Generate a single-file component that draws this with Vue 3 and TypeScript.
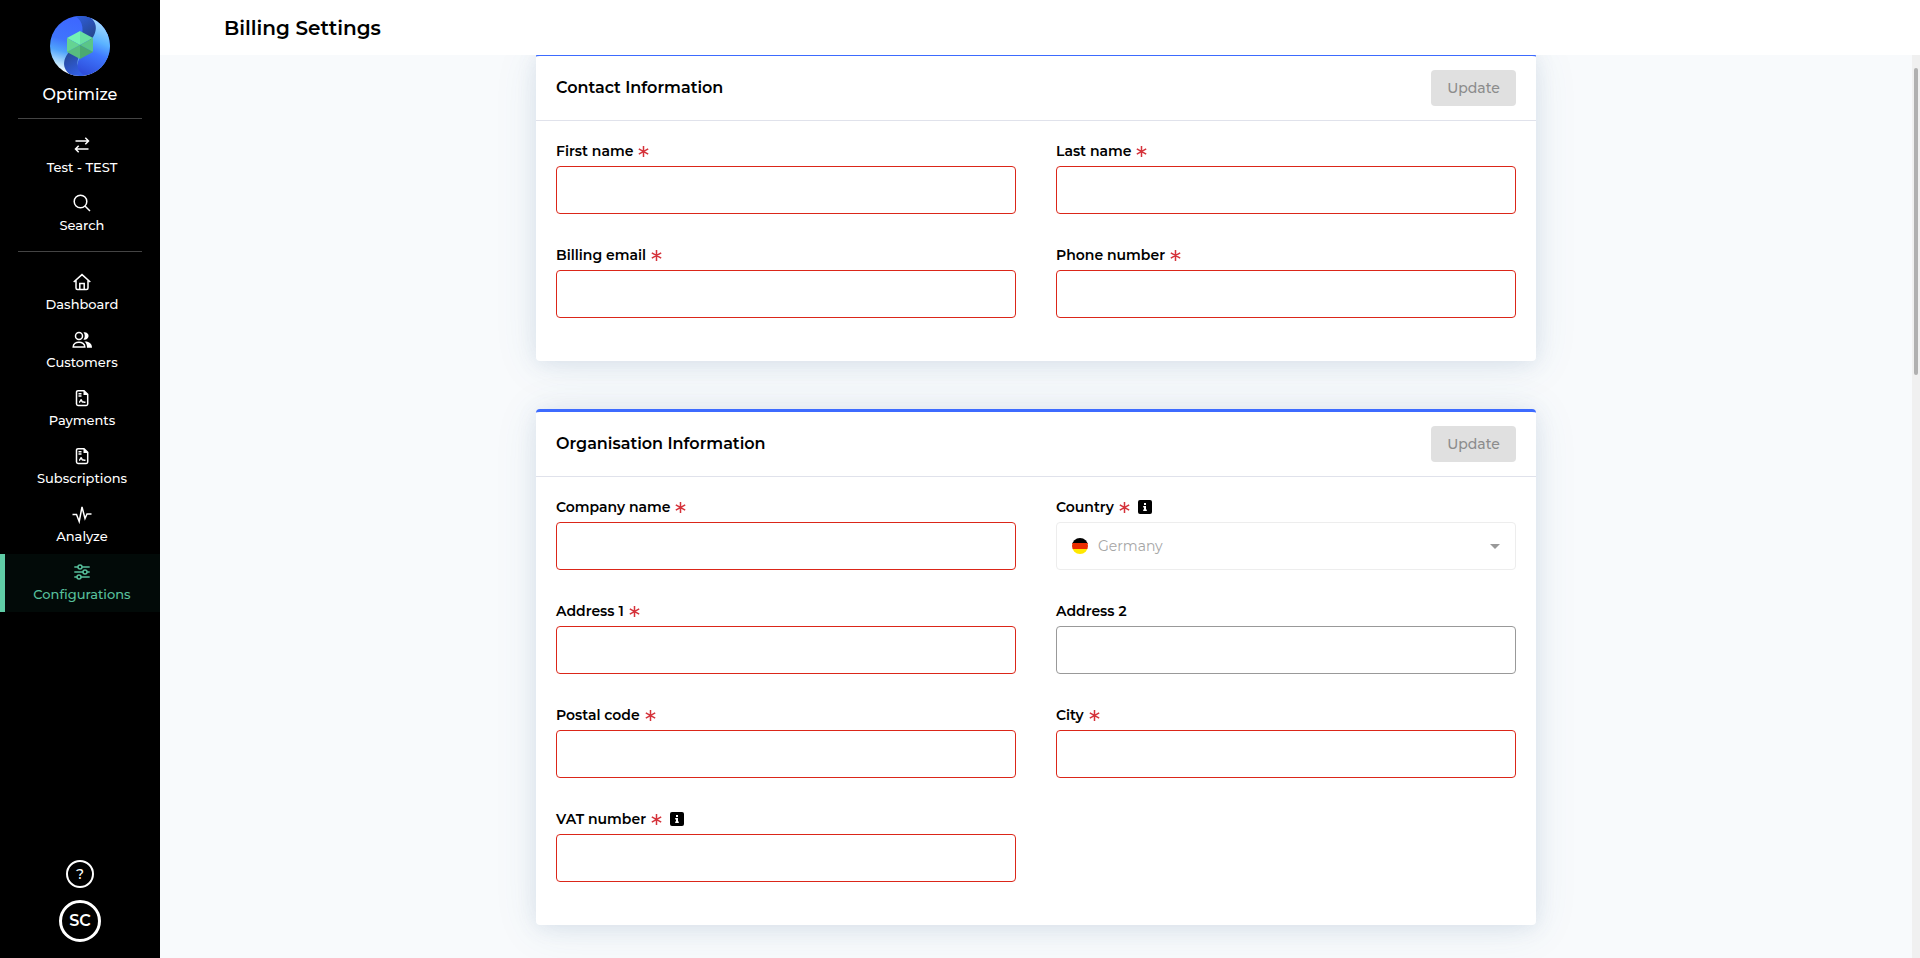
<script setup lang="ts">
import { ref } from 'vue'

interface NavItem {
  label: string
  icon: string
  active?: boolean
}

interface Field {
  id: string
  label: string
  required: boolean
  info?: boolean
  select?: boolean
}

interface Card {
  title: string
  fields: Field[]
}

const workspace: NavItem[] = [
  { label: 'Test - TEST', icon: 'switch' },
  { label: 'Search', icon: 'search' },
]

const navigation: NavItem[] = [
  { label: 'Dashboard', icon: 'home' },
  { label: 'Customers', icon: 'people' },
  { label: 'Payments', icon: 'file' },
  { label: 'Subscriptions', icon: 'file' },
  { label: 'Analyze', icon: 'pulse' },
  { label: 'Configurations', icon: 'sliders', active: true },
]

const groups = [workspace, navigation]

const cards: Card[] = [
  {
    title: 'Contact Information',
    fields: [
      { id: 'first-name', label: 'First name', required: true },
      { id: 'last-name', label: 'Last name', required: true },
      { id: 'billing-email', label: 'Billing email', required: true },
      { id: 'phone-number', label: 'Phone number', required: true },
    ],
  },
  {
    title: 'Organisation Information',
    fields: [
      { id: 'company-name', label: 'Company name', required: true },
      { id: 'country', label: 'Country', required: true, info: true, select: true },
      { id: 'address-1', label: 'Address 1', required: true },
      { id: 'address-2', label: 'Address 2', required: false },
      { id: 'postal-code', label: 'Postal code', required: true },
      { id: 'city', label: 'City', required: true },
      { id: 'vat-number', label: 'VAT number', required: true, info: true },
    ],
  },
]

const values = ref<Record<string, string>>({ country: 'Germany' })
</script>

<template>
  <div class="shell">
    <aside class="sidebar">
      <svg class="logo" viewBox="0 0 60 60" aria-hidden="true">
        <defs>
          <clipPath id="disc"><circle cx="30" cy="30" r="30" /></clipPath>
          <linearGradient id="left" x1="0.5" y1="0.1" x2="0.25" y2="0.95">
            <stop offset="0" stop-color="#3d68ff" />
            <stop offset="0.4" stop-color="#3f74fd" />
            <stop offset="0.62" stop-color="#4fa2fb" />
            <stop offset="0.85" stop-color="#b4dffd" />
            <stop offset="1" stop-color="#ffffff" />
          </linearGradient>
          <linearGradient id="right" x1="0.7" y1="0" x2="0.45" y2="1">
            <stop offset="0" stop-color="#b5e2ff" />
            <stop offset="0.4" stop-color="#5bb3ff" />
            <stop offset="0.62" stop-color="#3f78ff" />
            <stop offset="1" stop-color="#2f4fdc" />
          </linearGradient>
          <linearGradient id="darkTop" x1="0" y1="0" x2="0.6" y2="1">
            <stop offset="0" stop-color="#2f5fe0" />
            <stop offset="1" stop-color="#26478f" />
          </linearGradient>
          <linearGradient id="darkBottom" x1="0" y1="0" x2="0.6" y2="1">
            <stop offset="0" stop-color="#26478f" />
            <stop offset="1" stop-color="#315fe6" />
          </linearGradient>
        </defs>
        <g clip-path="url(#disc)">
          <rect width="60" height="60" fill="url(#left)" />
          <path d="M40 1C53 5 60 17 60 30C60 47 48 60 30 60C24 54 28 46 30 40L41 22C45 17 48 8 40 1Z" fill="url(#right)" />
          <path d="M25 0H38C50 7 46 18 41 24L30 24C34 16 34 5 25 0Z" fill="url(#darkTop)" />
          <path d="M35 60H22C10 52 14 42 19 36L30 38C26 46 26 55 35 60Z" fill="url(#darkBottom)" />
        </g>
        <path d="M30 15L43 22L30 29Z" fill="#69dfa2" />
        <path d="M30 15L17 22L30 29Z" fill="#73f2b5" />
        <path d="M17 22V36L30 29Z" fill="#64d492" />
        <path d="M43 22V36L30 29Z" fill="#5ac588" />
        <path d="M17 36L30 43V29Z" fill="#58bd7f" />
        <path d="M43 36L30 43V29Z" fill="#4ba970" />
      </svg>
      <p class="brand">Optimize</p>

      <nav v-for="(group, g) in groups" :key="g" class="group">
        <a v-for="item in group" :key="item.label" href="#" class="item" :class="{ active: item.active }">
          <svg v-if="item.icon === 'switch'" class="icon" viewBox="0 0 20 20" stroke-width="1.5">
            <path d="M3.5 6H16M13.3 2.8L16.5 6L13.3 9.2M16.5 14H4M6.7 10.8L3.5 14L6.7 17.2" />
          </svg>
          <svg v-else-if="item.icon === 'search'" class="icon" viewBox="0 0 20 20" stroke-width="1.5">
            <circle cx="8.5" cy="8.5" r="6.3" />
            <path d="M13 13L18 18" />
          </svg>
          <svg v-else-if="item.icon === 'home'" class="icon" viewBox="0 0 20 20" stroke-width="1.5">
            <path d="M1.7 10L10 2.6L18.3 10M4 8.2V16A1.5 1.5 0 0 0 5.5 17.5H14.5A1.5 1.5 0 0 0 16 16V8.2M7.8 17.5V11.5H12.2V17.5" />
          </svg>
          <svg v-else-if="item.icon === 'people'" class="icon" viewBox="0 0 20 20" stroke-width="1.5">
            <circle cx="7" cy="6" r="3.5" />
            <path d="M1.2 17C1.2 10.6 12.8 10.6 12.8 17Z" />
            <path class="solid" d="M11.5 2.3C18.3 1.5 18.3 10.4 11.5 9.7C13.2 7.4 13.2 4.6 11.5 2.3ZM12.5 11.5C17 11.2 20 13.6 20 17.7H15C15 15 14.4 13.1 12.5 11.5Z" />
          </svg>
          <svg v-else-if="item.icon === 'file'" class="icon" viewBox="0 0 20 20" stroke-width="1.5">
            <path d="M6 2.7H12L15.7 6.4V16A1.4 1.4 0 0 1 14.3 17.4H6A1.5 1.5 0 0 1 4.5 16V4.2A1.5 1.5 0 0 1 6 2.7ZM6.5 5.8H9.5M6.5 8H9.5M7 14.3C8.3 14.3 8.5 11.8 9.2 11.8S9.8 14.3 10.7 14C11.4 13.7 11.6 14.3 13.5 14.3" />
            <path class="solid" d="M11.5 2.5L16 7H11.5Z" />
          </svg>
          <svg v-else-if="item.icon === 'pulse'" class="icon" viewBox="0 0 20 20" stroke-width="1.5">
            <path d="M.5 10.5H4.5L7.2 17.5L10 3L13 14.5L15 10H19.5" />
          </svg>
          <svg v-else class="icon" viewBox="0 0 20 20" stroke-width="1.5">
            <path d="M2.3 5H6M10 5H17.7M2.3 10H11M15 10H17.7M2.3 15H5M9 15H17.7" />
            <circle cx="8" cy="5" r="2" />
            <circle cx="13" cy="10" r="2" />
            <circle cx="7" cy="15" r="2" />
          </svg>
          <span>{{ item.label }}</span>
        </a>
      </nav>

      <div class="account">
        <button type="button" class="help" aria-label="Help">?</button>
        <button type="button" class="avatar">SC</button>
      </div>
    </aside>

    <div class="page">
      <header class="topbar">
        <h1>Billing Settings</h1>
      </header>

      <div class="viewport">
        <main class="content">
          <form v-for="card in cards" :key="card.title" class="card" @submit.prevent>
            <div class="card-head">
              <h2>{{ card.title }}</h2>
              <button type="submit" class="update" disabled>Update</button>
            </div>
            <div class="fields">
              <div v-for="field in card.fields" :key="field.id" class="field">
                <div class="label-row">
                  <label :for="field.id">{{ field.label }}</label>
                  <svg v-if="field.required" class="star" viewBox="0 0 11 11" aria-hidden="true">
                    <path d="M5.5 0V11M.8 2.8L10.2 8.2M10.2 2.8L.8 8.2" />
                  </svg>
                  <svg v-if="field.info" class="info" viewBox="0 0 14 14" aria-hidden="true">
                    <rect width="14" height="14" rx="2" />
                    <path d="M6 3H8V5H6ZM5.2 6H8V9.5H8.8V11H5.2V9.5H6V7.4H5.2Z" />
                  </svg>
                </div>
                <div v-if="field.select" class="select-box">
                  <svg class="flag" viewBox="0 0 16 16" aria-hidden="true">
                    <clipPath id="round"><circle cx="8" cy="8" r="8" /></clipPath>
                    <g clip-path="url(#round)">
                      <rect width="16" height="6" fill="#000" />
                      <rect y="5" width="16" height="6" fill="#eb2d00" />
                      <rect y="11" width="16" height="5" fill="#ffe800" />
                    </g>
                  </svg>
                  <select :id="field.id" v-model="values[field.id]" disabled>
                    <option>Germany</option>
                  </select>
                  <svg class="caret" viewBox="0 0 10 5" aria-hidden="true"><path d="M0 0H10L5 5Z" /></svg>
                </div>
                <input v-else :id="field.id" v-model="values[field.id]" type="text" :class="{ invalid: field.required }" />
              </div>
            </div>
          </form>
        </main>
        <div class="scroll-track"><div class="scroll-thumb"></div></div>
      </div>
    </div>
  </div>
</template>

<style>
body {
  margin: 0;
}
</style>

<style scoped>
.shell,
.shell * {
  box-sizing: border-box;
}

.shell {
  display: flex;
  height: 100vh;
  font-family: Montserrat, Inter, "Open Sans", sans-serif;
  font-size: 14px;
  line-height: 20px;
  color: #000;
}

h1,
h2,
p {
  margin: 0;
}

button,
input,
select {
  font: inherit;
}

.sidebar {
  display: flex;
  flex-direction: column;
  align-items: center;
  flex: 0 0 160px;
  padding: 16px 0;
  background: #000;
  color: #fff;
}

.logo {
  flex: none;
  width: 60px;
  height: 60px;
}

.brand {
  margin: 9px 0 13px;
  font-size: 16px;
  font-weight: 500;
}

.group {
  position: relative;
  display: flex;
  flex-direction: column;
  align-self: stretch;
  padding: 9px 0 8px;
}

.group + .group {
  padding-top: 13px;
}

.group::before {
  content: "";
  position: absolute;
  top: 0;
  left: 18px;
  right: 18px;
  height: 1px;
  background: #444;
}

.item {
  display: flex;
  flex-direction: column;
  align-items: center;
  gap: 2px;
  height: 58px;
  padding: 8px 1px 0 0;
  border-left: 5px solid transparent;
  color: #fff;
  font-size: 13px;
  font-weight: 500;
  text-decoration: none;
}

.item.active {
  border-color: #5fcca6;
  background: #020a08;
  color: #57c09c;
}

.icon {
  flex: none;
  width: 20px;
  height: 20px;
  fill: none;
  stroke: currentColor;
}

.item .solid {
  fill: currentColor;
  stroke: none;
}

.account {
  display: flex;
  flex-direction: column;
  align-items: center;
  gap: 12px;
  margin-top: auto;
}

.account button {
  padding: 0;
  border: 2px solid #fff;
  border-radius: 50%;
  background: transparent;
  color: #fff;
}

.help {
  width: 28px;
  height: 28px;
  font-size: 14px;
  font-weight: 500;
}

.account .avatar {
  width: 42px;
  height: 42px;
  border-width: 3px;
  font-size: 16px;
  font-weight: 600;
}

.page {
  display: flex;
  flex: 1;
  flex-direction: column;
  min-width: 0;
}

.topbar {
  display: flex;
  align-items: center;
  flex: 0 0 55px;
  padding: 0 64px;
  background: #fff;
}

h1 {
  font-size: 20px;
  font-weight: 600;
  line-height: 28px;
}

.viewport {
  display: flex;
  flex: 1;
  min-height: 0;
  background: #f8fafc;
}

.content {
  flex: 1;
  min-width: 0;
  padding-bottom: 32px;
  overflow-y: auto;
  scrollbar-width: none;
}

.scroll-track {
  flex: 0 0 8px;
  padding: 13px 2px 0;
  background: #f0f0f0;
}

.scroll-thumb {
  height: 34.5%;
  border-radius: 2px;
  background: #b0b0b0;
}

.card {
  max-width: 1000px;
  margin: -2px auto 50px;
  border-top: 3px solid #3d6bff;
  border-radius: 4px;
  background: #fff;
  box-shadow: 0 4px 44px rgba(60, 120, 150, 0.1), 0 2px 20px rgba(80, 110, 160, 0.12);
}

.card:last-child {
  margin-bottom: 0;
}

.card-head {
  display: flex;
  align-items: center;
  justify-content: space-between;
  height: 65px;
  padding: 0 20px;
  border-bottom: 1px solid #e0e2eb;
}

h2 {
  font-size: 16px;
  font-weight: 600;
}

.update {
  width: 85px;
  height: 36px;
  padding: 0;
  border: 0;
  border-radius: 4px;
  background: #e0e0e0;
  color: #8c8c8c;
  font-size: 14px;
  font-weight: 500;
}

.fields {
  display: grid;
  grid-template-columns: 1fr 1fr;
  gap: 31px 40px;
  padding: 20px 20px 43px;
}

.field {
  display: flex;
  flex-direction: column;
  gap: 5px;
}

.label-row {
  display: flex;
  align-items: center;
  height: 20px;
  font-weight: 600;
}

.star {
  width: 11px;
  height: 11px;
  margin-left: 5px;
  fill: none;
  stroke: #d5323a;
  stroke-width: 1.5;
}

.info {
  width: 14px;
  height: 14px;
  margin-left: 8px;
}

.info path {
  fill: #fff;
}

input {
  width: 100%;
  height: 48px;
  padding: 0 15px;
  border: 1px solid #999;
  border-radius: 4px;
  background: #fff;
  outline: none;
}

input.invalid {
  border-color: #db2619;
}

.select-box {
  position: relative;
}

.select-box select {
  width: 100%;
  height: 48px;
  padding: 0 41px;
  border: 1px solid #ededed;
  border-radius: 4px;
  appearance: none;
  background: #fff;
  color: #a6a6a6;
  font-size: 14px;
  opacity: 1;
}

.flag {
  position: absolute;
  top: 16px;
  left: 16px;
  width: 16px;
  height: 16px;
}

.caret {
  position: absolute;
  top: 22px;
  right: 16px;
  width: 10px;
  height: 5px;
  fill: #999;
}
</style>
